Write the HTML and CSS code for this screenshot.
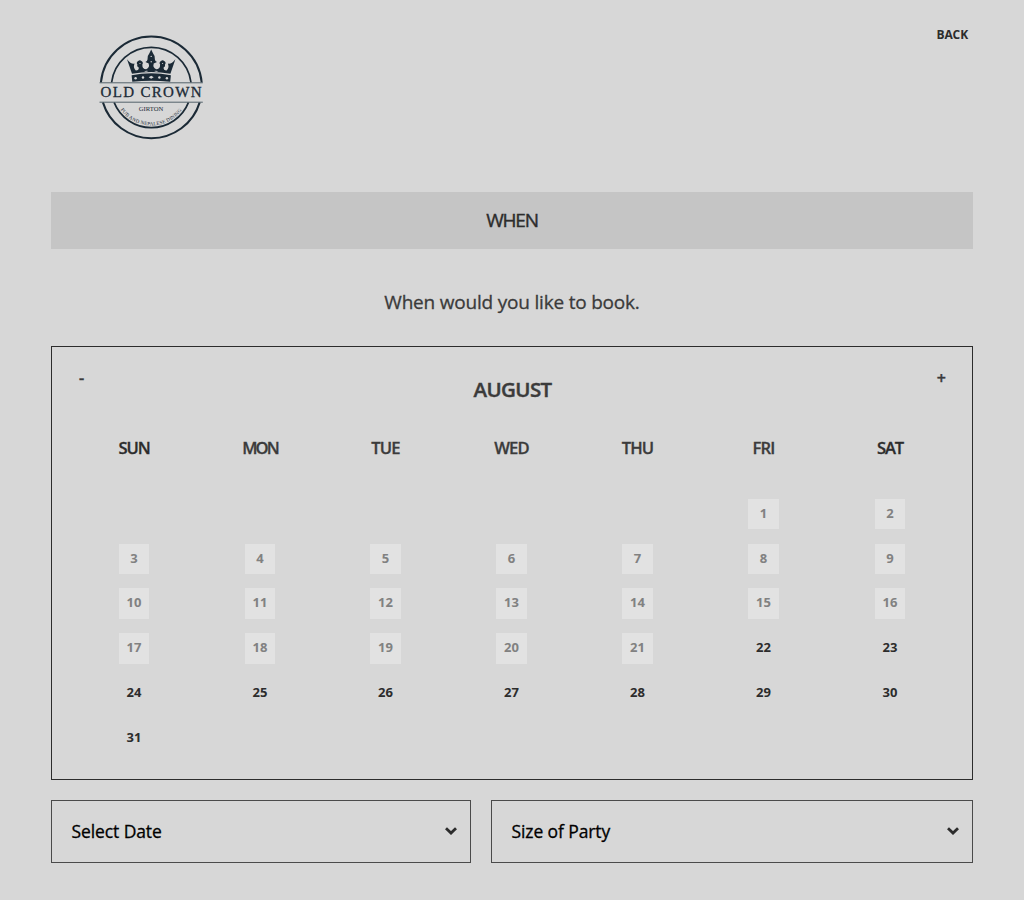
FILE: index.html
```html
<!DOCTYPE html>
<html lang="en">
<head>
<meta charset="utf-8">
<title>Old Crown Girton</title>
<link rel="stylesheet" href="styles.css">
</head>
<body>
<div class="page">
  <header class="header">
    <svg class="logo" viewBox="0 0 125 125" width="125" height="125" role="img" aria-label="Old Crown Girton">
      <g fill="none" stroke="#1b2a36">
        <path stroke-width="2" d="M10.9 57.5A50.6 50.6 0 0 1 111.7 57.5M12.9 77.4A50.6 50.6 0 0 0 109.7 77.4"/>
        <path stroke-width="1.7" d="M21.6 57.5A40 40 0 0 1 101 57.5M24.1 77.4A40 40 0 0 0 98.5 77.4"/>
        <path stroke-width="1" stroke="#53616a" d="M9.5 57.8H112.8M9.5 77.2H112.8"/>
      </g>
      <g fill="#1b2a36">
        <path d="M42.3 56.8L41.6 50.2Q61.2 46.5 80.9 50.2L80.2 56.8Q61.2 54.5 42.3 56.8Z"/>
        <path d="M42 48.8L37 34.2Q41.2 39.6 44.5 38.6Q42.9 43.2 45.8 45.4Q49 45.5 48.8 42.4Q46.6 41.7 47.4 39.5Q45.8 37.4 48.2 35.9Q49.8 34.6 51.4 35.9Q53.8 37.4 52.3 39.5Q52.2 44.2 56.2 44.2Q59.9 43 58.7 38.6L55.4 37Q57.4 36 57.5 34.4Q57.2 30.6 59.4 28.2L61.2 24.5L63 28.2Q65.2 30.6 64.9 34.4Q65 36 67 37L63.7 38.6Q62.5 43 66.2 44.2Q70.2 44.2 70.1 39.5Q68.6 37.4 71 35.9Q72.6 34.6 74.2 35.9Q76.6 37.4 75 39.5Q75.8 41.7 73.6 42.4Q73.4 45.5 76.6 45.4Q79.5 43.2 77.9 38.6Q81.2 39.6 85.4 34.2L80.4 48.8Q61.2 45.4 42 48.8Z"/>
      </g>
      <g fill="#d7d7d7">
        <circle cx="45.6" cy="53.2" r="1.2"/><circle cx="53" cy="52.5" r="1.2"/>
        <path d="M58.7 52.3L61.2 50.8L63.7 52.3L61.2 53.8Z"/>
        <circle cx="69.4" cy="52.5" r="1.2"/><circle cx="76.9" cy="53.2" r="1.2"/>
        <circle cx="61.2" cy="31.4" r=".7"/><circle cx="61.2" cy="36.8" r=".7"/>
        <circle cx="50" cy="38.5" r=".6"/><circle cx="72.6" cy="38.5" r=".6"/>
        <path d="M54 46.3Q56.2 45.2 58.3 46Q56.2 47.3 54 46.3ZM64.1 46Q66.2 45.2 68.4 46.3Q66.2 47.3 64.1 46Z"/>
      </g>
      <path id="motto" fill="none" d="M30 84A38 38 0 0 0 92.6 84"/>
      <g class="logo-text">
        <text class="logo-name" x="10.6" y="72" font-size="15" textLength="101">OLD CROWN</text>
        <text x="48.8" y="85.6" font-size="6.6" textLength="24.5" lengthAdjust="spacingAndGlyphs">GIRTON</text>
        <text font-size="5"><textPath href="#motto" startOffset="1" textLength="71">PUB AND NEPALESE DINING</textPath></text>
      </g>
    </svg>
    <a class="back">BACK</a>
  </header>

  <h1 class="banner"><span>WHEN</span></h1>
  <p class="prompt">When would you like to book.</p>

  <section class="calendar">
    <div class="calendar-head">
      <span class="step">-</span>
      <h2 class="month">AUGUST</h2>
      <span class="step next">+</span>
    </div>
    <div class="weekdays">
      <span class="weekend">SUN</span><span class="wide">MON</span><span>TUE</span><span>WED</span><span>THU</span><span>FRI</span><span class="weekend">SAT</span>
    </div>
    <div class="days">
      <span class="day past first">1</span><span class="day past">2</span>
      <span class="day past">3</span><span class="day past">4</span><span class="day past">5</span><span class="day past">6</span><span class="day past">7</span><span class="day past">8</span><span class="day past">9</span>
      <span class="day past">10</span><span class="day past">11</span><span class="day past">12</span><span class="day past">13</span><span class="day past">14</span><span class="day past">15</span><span class="day past">16</span>
      <span class="day past">17</span><span class="day past">18</span><span class="day past">19</span><span class="day past">20</span><span class="day past">21</span><span class="day">22</span><span class="day">23</span>
      <span class="day">24</span><span class="day">25</span><span class="day">26</span><span class="day">27</span><span class="day">28</span><span class="day">29</span><span class="day">30</span>
      <span class="day">31</span>
    </div>
  </section>

  <div class="fields">
    <div class="field date"><span>Select Date</span>
      <svg width="12" height="8" viewBox="0 0 12 8"><path d="M1 1.2L6 6L11 1.2" fill="none" stroke="#2c2c2c" stroke-width="2.8"/></svg>
    </div>
    <div class="field party"><span>Size of Party</span>
      <svg width="12" height="8" viewBox="0 0 12 8"><path d="M1 1.2L6 6L11 1.2" fill="none" stroke="#2c2c2c" stroke-width="2.8"/></svg>
    </div>
  </div>
</div>
</body>
</html>
```
FILE: styles.css
```css
* { box-sizing: border-box; }

body {
  margin: 0;
  background: #d7d7d7;
  color: #3b3b3b;
  font-family: "Trebuchet MS", "Open Sans", "Noto Sans", sans-serif;
}

.page {
  width: 922px;
  height: 900px;
  margin: 0 auto;
}

.header {
  display: flex;
  justify-content: space-between;
  height: 192px;
  padding: 25px 5px 0 39px;
}

.logo { display: block; }

.logo-text {
  font-family: "Liberation Serif", serif;
  fill: #1b2a36;
}

.logo-name {
  stroke: #1b2a36;
  stroke-width: 0.3px;
}

.back {
  padding-top: 1px;
  font-size: 12px;
  font-weight: 700;
  line-height: 18px;
  letter-spacing: -0.1px;
  color: #2c2c2c;
}

.banner {
  display: flex;
  align-items: center;
  justify-content: center;
  height: 57px;
  margin: 0;
  padding-bottom: 2px;
  background: #c5c5c5;
  color: #2c2c2c;
  font-size: 19px;
  font-weight: 500;
  letter-spacing: -1.2px;
  -webkit-text-stroke: 0.4px;
}

.prompt {
  height: 97px;
  margin: 0;
  padding-top: 39px;
  line-height: 28px;
  text-align: center;
  font-size: 19px;
  font-weight: 500;
  letter-spacing: -0.2px;
  -webkit-text-stroke: 0.3px;
}

.calendar {
  height: 434px;
  padding: 0 19px;
  border: 1px solid #2c2c2c;
}

.calendar-head {
  display: flex;
  justify-content: space-between;
  height: 86px;
  padding: 18px 7px 0 8px;
}

.step {
  width: 40px;
  line-height: 26px;
  font-size: 16px;
  font-weight: 600;
  -webkit-text-stroke: 0.4px;
}

.next { text-align: right; }

.month {
  margin: 0;
  line-height: 48px;
  font-size: 20.5px;
  font-weight: 600;
  letter-spacing: -0.6px;
  -webkit-text-stroke: 0.4px;
}

.weekdays,
.days {
  display: grid;
  grid-template-columns: 126px 126px 125px 127px 125px 127px 126px;
  justify-items: center;
}

.weekdays {
  height: 66px;
  line-height: 30px;
  font-size: 16.6px;
  font-weight: 600;
  letter-spacing: -0.9px;
  -webkit-text-stroke: 0.3px;
}

.weekend {
  color: #2c2c2c;
  letter-spacing: -1.1px;
}

.wide { letter-spacing: -2px; }

.days { grid-auto-rows: 44.73px; }

.day {
  width: 30.4px;
  height: 30.4px;
  line-height: 29px;
  text-align: center;
  font-size: 13px;
  font-weight: 700;
  color: #2c2c2c;
}

.past {
  background: #e2e2e2;
  color: #818181;
}

.first { grid-column: 6; }

.fields {
  display: flex;
  gap: 20px;
  padding-top: 20px;
}

.field {
  display: flex;
  align-items: center;
  justify-content: space-between;
  height: 63px;
  padding: 0 13px 2px 19.5px;
  border: 1px solid #4a4a4a;
  color: #000;
  font-size: 17.5px;
  font-weight: 500;
  letter-spacing: -0.1px;
  -webkit-text-stroke: 0.3px;
}

.date { width: 420px; }
.party { width: 482px; }
```
